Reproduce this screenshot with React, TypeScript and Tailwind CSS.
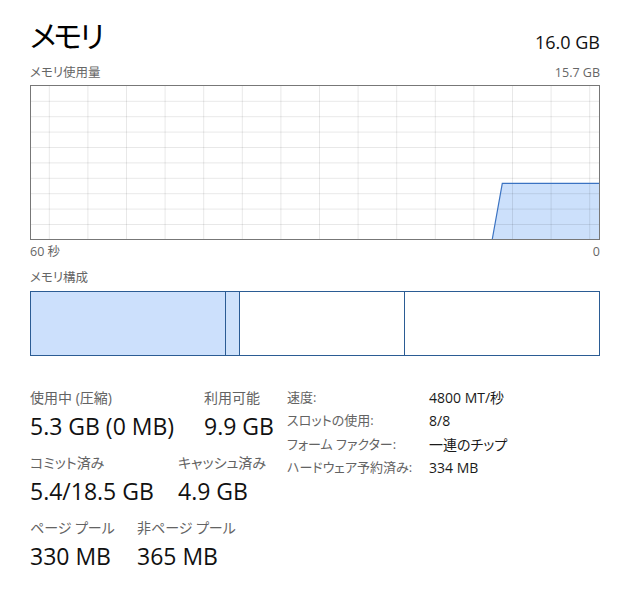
import React from "react";

const font =
  "font-['Open_Sans','Noto_Sans_CJK_JP',sans-serif] [font-feature-settings:'palt']";

// grid lines inside the usage graph (inner coords, 568 x 153)
const vLines = Array.from({ length: 15 }, (_, i) => 18.3 + i * 38.6);
const hLines = Array.from({ length: 9 }, (_, i) => 15.3 + i * 15.4);

function UsageGraph() {
  return (
    <div className="h-[155px] w-[570px] border border-[#777] bg-white">
      <svg width="568" height="153" viewBox="0 0 568 153" className="block">
        <polygon
          points="461.3,153 471.3,97.3 568,97.3 568,153"
          fill="#cce0fb"
        />
        {vLines.map((x) => (
          <line key={`v${x}`} x1={x} y1={0} x2={x} y2={153} stroke="#000" strokeOpacity="0.09" />
        ))}
        {hLines.map((y) => (
          <line key={`h${y}`} x1={0} y1={y} x2={568} y2={y} stroke="#000" strokeOpacity="0.09" />
        ))}
        <polyline
          points="461.3,153 471.3,97.3 568,97.3"
          fill="none"
          stroke="#3b73c2"
          strokeWidth="1.2"
        />
      </svg>
    </div>
  );
}

function CompositionBar() {
  return (
    <div className="flex h-[65px] w-[570px] border border-[#2b5c94]">
      <div className="w-[195px] border-r border-[#2b5c94] bg-[#cce0fc]" />
      <div className="w-[14px] border-r border-[#2b5c94] bg-[#cfe2fb]" />
      <div className="w-[165px] border-r border-[#2b5c94] bg-white" />
      <div className="flex-1 bg-white" />
    </div>
  );
}

function Stat({ label, value }: { label: string; value: string }) {
  return (
    <div>
      <div className="h-[20px] text-[14px] leading-[20px] text-[#636363]">{label}</div>
      <div className="h-[36px] text-[23px] leading-[36px] text-[#111]">{value}</div>
    </div>
  );
}

const specs = [
  { label: "速度:", value: "4800 MT/秒" },
  { label: "スロットの使用:", value: "8/8" },
  { label: "フォーム ファクター:", value: "一連のチップ" },
  { label: "ハードウェア予約済み:", value: "334 MB" },
];

export default function App() {
  return (
    <div className={`h-[594px] w-[628px] bg-white ${font}`}>
      <div className="ml-[30px] w-[570px]">
        {/* header */}
        <div className="flex h-[62px] items-start justify-between">
          <div className="mt-[16px] text-[30px] leading-[40px] tracking-[-2.5px] text-black">メモリ</div>
          <div className="mt-[30px] text-[18px] leading-[24px] text-[#111]">16.0 GB</div>
        </div>

        <div className="flex h-[23px] items-center justify-between text-[12.5px] text-[#666]">
          <span>メモリ使用量</span>
          <span>15.7 GB</span>
        </div>

        <UsageGraph />

        <div className="flex h-[25px] items-center justify-between text-[12.5px] text-[#666]">
          <span>60 秒</span>
          <span>0</span>
        </div>

        <div className="flex h-[26px] items-center text-[12.5px] text-[#666]">メモリ構成</div>

        <CompositionBar />

        {/* stats */}
        <div className="mt-[28px] flex">
          <div className="flex w-[257px] flex-col gap-[9px] pt-[4px]">
            <div className="flex">
              <div className="w-[174px]">
                <Stat label="使用中 (圧縮)" value="5.3 GB (0 MB)" />
              </div>
              <Stat label="利用可能" value="9.9 GB" />
            </div>
            <div className="flex">
              <div className="w-[148px]">
                <Stat label="コミット済み" value="5.4/18.5 GB" />
              </div>
              <Stat label="キャッシュ済み" value="4.9 GB" />
            </div>
            <div className="flex">
              <div className="w-[107px]">
                <Stat label="ページ プール" value="330 MB" />
              </div>
              <Stat label="非ページ プール" value="365 MB" />
            </div>
          </div>

          <div className="flex flex-col pt-[1.5px]">
            {specs.map((s) => (
              <div key={s.label} className="flex h-[23.5px] items-center">
                <span className="w-[142px] text-[13px] text-[#636363]">{s.label}</span>
                <span className="text-[14px] text-[#1a1a1a]">{s.value}</span>
              </div>
            ))}
          </div>
        </div>
      </div>
    </div>
  );
}
